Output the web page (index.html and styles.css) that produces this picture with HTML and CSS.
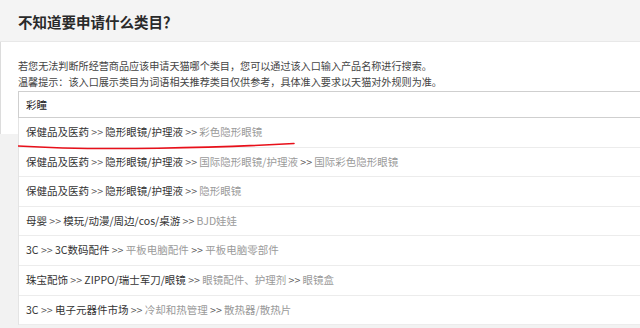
FILE: index.html
```html
<!DOCTYPE html>
<html lang="zh-CN">
<head>
<meta charset="utf-8">
<link rel="stylesheet" href="styles.css">
</head>
<body>
<div class="page">
  <div class="header"><h1 class="title">不知道要申请什么类目？</h1></div>
  <div class="panel">
    <p class="desc">若您无法判断所经营商品应该申请天猫哪个类目，您可以通过该入口输入产品名称进行搜索。</p>
    <p class="desc">温馨提示：该入口展示类目为词语相关推荐类目仅供参考，具体准入要求以天猫对外规则为准。</p>
    <div class="search">
      <div class="input">彩瞳</div>
      <ul class="dropdown">
        <li class="row"><span class="d">保健品及医药</span><span class="s"> &gt;&gt; </span><span class="d">隐形眼镜/护理液</span><span class="s"> &gt;&gt; </span><span class="g">彩色隐形眼镜</span></li>
        <li class="row"><span class="d">保健品及医药</span><span class="s"> &gt;&gt; </span><span class="d">隐形眼镜/护理液</span><span class="s"> &gt;&gt; </span><span class="g">国际隐形眼镜/护理液</span><span class="s"> &gt;&gt; </span><span class="g">国际彩色隐形眼镜</span></li>
        <li class="row"><span class="d">保健品及医药</span><span class="s"> &gt;&gt; </span><span class="d">隐形眼镜/护理液</span><span class="s"> &gt;&gt; </span><span class="g">隐形眼镜</span></li>
        <li class="row"><span class="d">母婴</span><span class="s"> &gt;&gt; </span><span class="d">模玩/动漫/周边/cos/桌游</span><span class="s"> &gt;&gt; </span><span class="g">BJD娃娃</span></li>
        <li class="row"><span class="d">3C</span><span class="s"> &gt;&gt; </span><span class="d">3C数码配件</span><span class="s"> &gt;&gt; </span><span class="g">平板电脑配件</span><span class="s"> &gt;&gt; </span><span class="g">平板电脑零部件</span></li>
        <li class="row"><span class="d">珠宝配饰</span><span class="s"> &gt;&gt; </span><span class="d">ZIPPO/瑞士军刀/眼镜</span><span class="s"> &gt;&gt; </span><span class="g">眼镜配件、护理剂</span><span class="s"> &gt;&gt; </span><span class="g">眼镜盒</span></li>
        <li class="row"><span class="d">3C</span><span class="s"> &gt;&gt; </span><span class="d">电子元器件市场</span><span class="s"> &gt;&gt; </span><span class="g">冷却和热管理</span><span class="s"> &gt;&gt; </span><span class="g">散热器/散热片</span></li>
      </ul>
      <svg class="mark" width="300" height="12" viewBox="0 0 300 12"><path d="M0 7 C 40 9.5, 90 10, 140 9.2 S 240 6.5, 276 4.5" fill="none" stroke="#e8101a" stroke-width="1.6" stroke-linecap="round"/></svg>
    </div>
  </div>
</div>
</body>
</html>
```
FILE: styles.css
```css
* { box-sizing: border-box; }
html, body { margin: 0; padding: 0; }
body {
  width: 640px;
  height: 328px;
  overflow: hidden;
  background: #f2f2f2;
  font-family: "Noto Sans CJK SC", "Noto Sans", sans-serif;
  color: #333;
}
.page { width: 640px; }
.header {
  height: 42px;
  background: #f4f4f4;
  border-bottom: 1px solid #e8e8e8;
  padding-left: 18px;
  display: flex;
  align-items: center;
}
.title {
  margin: 0;
  font-size: 14.5px;
  font-weight: 700;
  color: #2a2a2a;
  padding-top: 2px;
}
.panel {
  background: #fff;
  border-left: 1px solid #dcdcdc;
  height: 92px;
  padding: 16px 0 0 17px;
}
.desc {
  margin: 0;
  font-size: 10.1px;
  line-height: 16px;
  color: #444;
  white-space: nowrap;
}
.search {
  position: relative;
  margin-top: 1px;
}
.input {
  height: 27px;
  border: 1px solid #cfcfcf;
  border-right: none;
  background: #fff;
  padding-left: 7px;
  font-size: 10.5px;
  line-height: 25px;
  color: #222;
}
.dropdown {
  position: absolute;
  top: 100%;
  left: 0;
  right: 0;
  margin: 0;
  padding: 0;
  list-style: none;
  background: #fff;
  border-left: 1px solid #e4e4e4;
}
.row {
  height: 29.6px;
  border-bottom: 1.5px solid #ececec;
  padding-left: 7px;
  font-size: 10.5px;
  line-height: 28px;
  white-space: nowrap;
}
.d { color: #333; }
.s { color: #555; }
.g { color: #9a9a9a; }
.mark {
  position: absolute;
  left: 0;
  top: 48px;
}
```
